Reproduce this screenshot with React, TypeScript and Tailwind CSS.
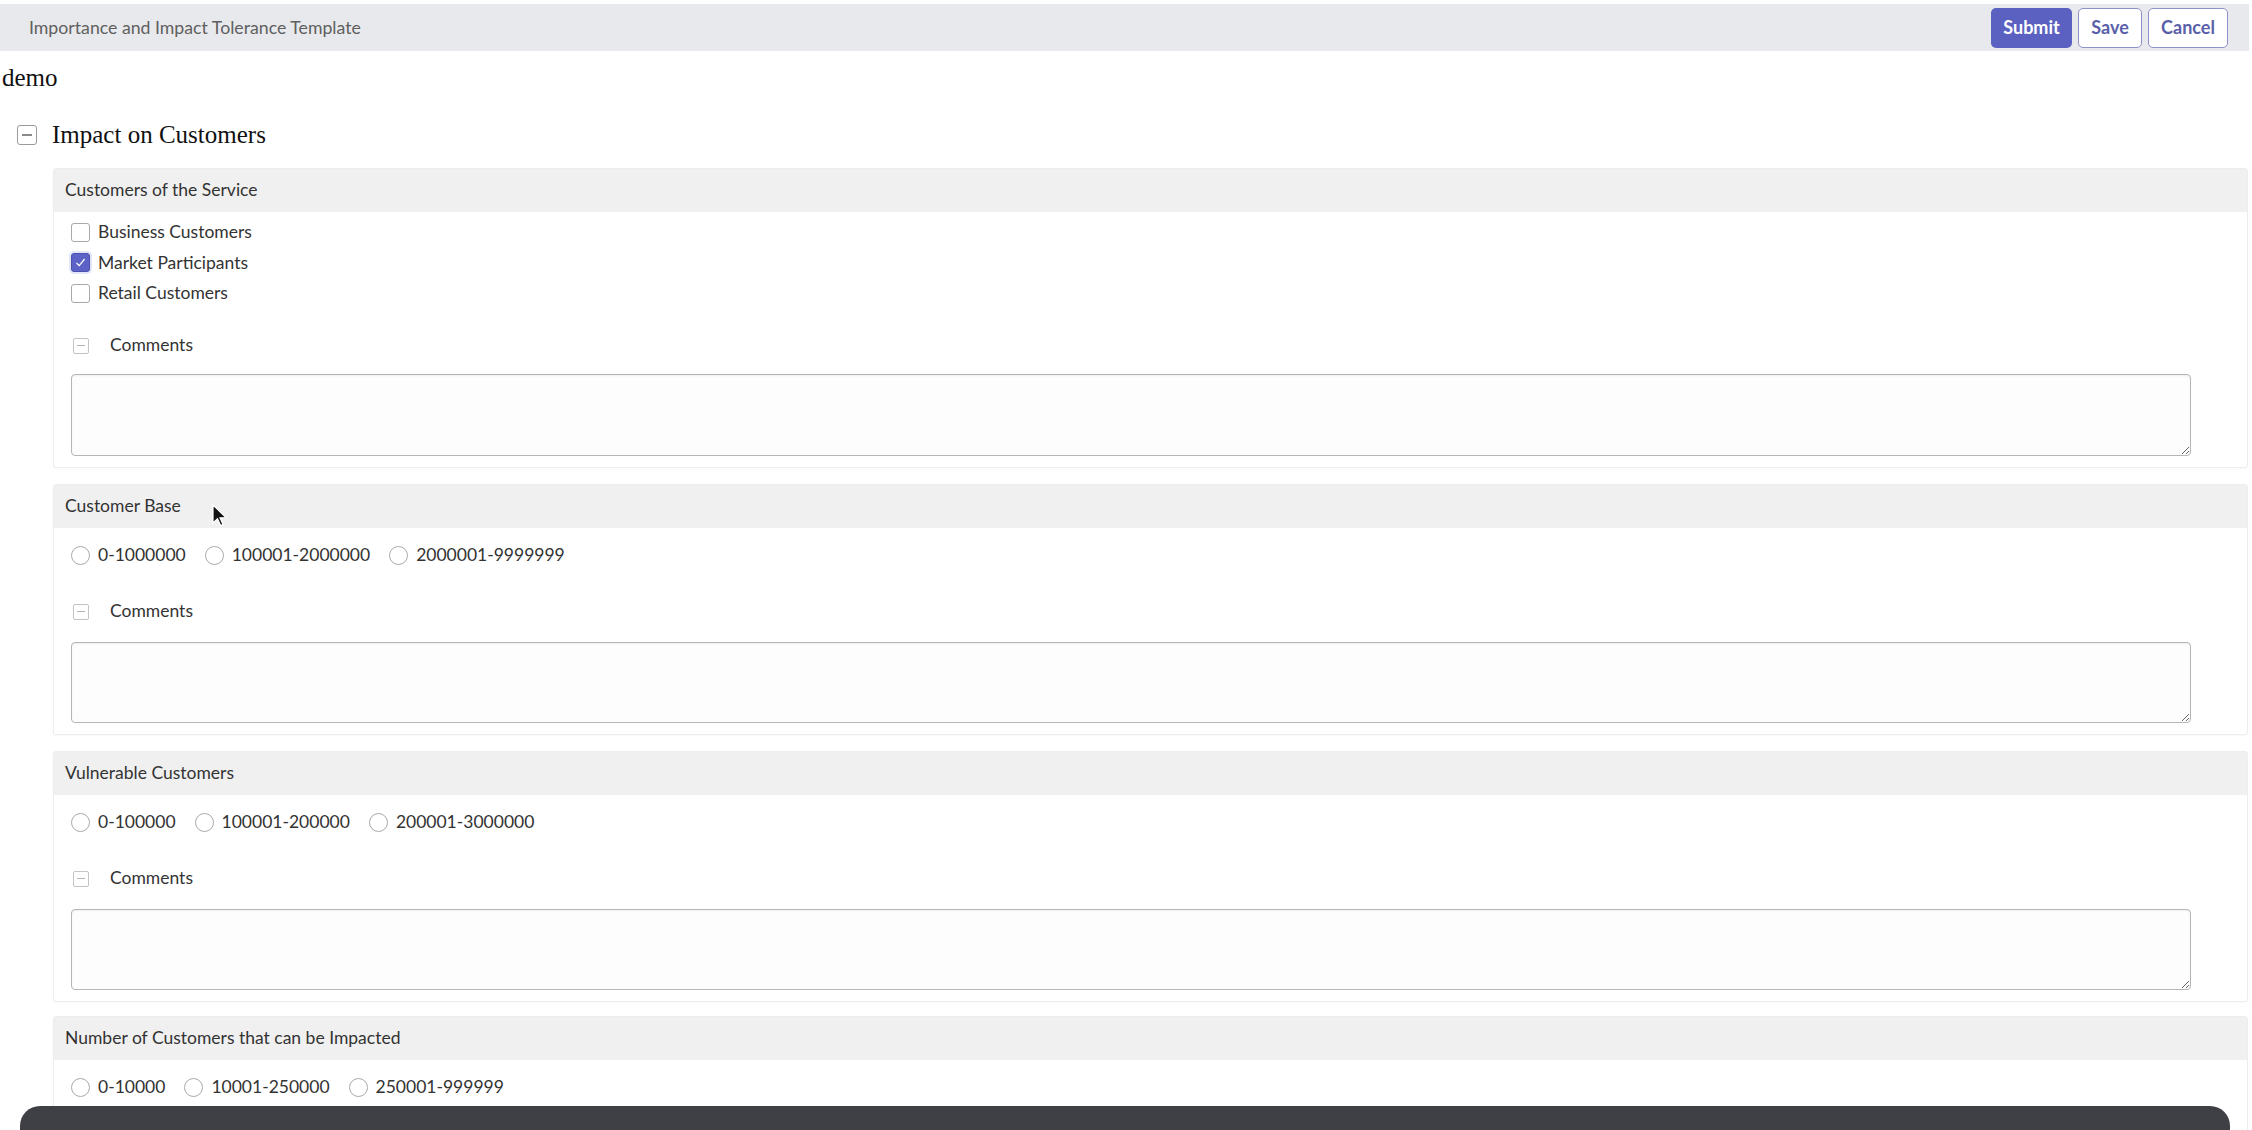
import React from "react";

const lato = { fontFamily: "Lato, 'Open Sans', sans-serif" };

function MinusBox({ big }: { big?: boolean }) {
  if (big) {
    return (
      <span className="flex h-[20px] w-[20px] items-center justify-center rounded-[3px] border border-[#9a9a9a] bg-white">
        <span className="block h-[1.5px] w-[10px] bg-[#8a8a8a]" />
      </span>
    );
  }
  return (
    <span className="flex h-[16px] w-[16px] items-center justify-center rounded-[2px] border border-[#c4c4c4] bg-white">
      <span className="block h-[1.5px] w-[8px] bg-[#b5b5b5]" />
    </span>
  );
}

function Checkbox({ label, checked }: { label: string; checked?: boolean }) {
  return (
    <div className="flex h-[30.5px] items-center">
      {checked ? (
        <span className="flex h-[19px] w-[19px] items-center justify-center rounded-[3px] border border-[#4b51ad] bg-[#5d63c6] shadow-[0_0_0_2px_#e3e6f8]">
          <svg width="13" height="13" viewBox="0 0 13 13">
            <path d="M2.5 7 L5.2 9.6 L10.6 3" fill="none" stroke="#fff" strokeWidth="1.2" />
          </svg>
        </span>
      ) : (
        <span className="h-[19px] w-[19px] rounded-[3px] border border-[#a9a9a9] bg-white" />
      )}
      <span className="ml-[8px] text-[17.5px] text-[#333]">{label}</span>
    </div>
  );
}

function Radio({ label }: { label: string }) {
  return (
    <div className="mr-[19px] flex items-center">
      <span className="h-[19px] w-[19px] rounded-full border border-[#a9a9a9] bg-white" />
      <span className="ml-[8px] text-[17.5px] text-[#333]">{label}</span>
    </div>
  );
}

function Comments({ mt, taMt, taH }: { mt: string; taMt: string; taH: string }) {
  return (
    <>
      <div className={`flex h-[30px] items-center pl-[19px] ${mt}`}>
        <MinusBox />
        <span className="ml-[21px] text-[17.5px] text-[#333]">Comments</span>
      </div>
      <div className={`mr-[56px] pl-[17px] ${taMt}`}>
        <textarea
          className={`block w-full rounded-[4px] border-[1.5px] border-[#b6b6ba] bg-[#fdfdfe] shadow-[inset_0_1px_2px_rgba(0,0,0,0.06)] outline-none ${taH}`}
        />
      </div>
    </>
  );
}

function Card({ title, children, mt }: { title: string; children: React.ReactNode; mt: string }) {
  return (
    <div className={`rounded-[3px] border border-[#ededed] bg-white shadow-[0_1px_2px_rgba(0,0,0,0.03)] ${mt}`}>
      <div className="flex h-[43px] items-center bg-[#f0f0f0] pl-[11px] text-[17.5px] text-[#333]">{title}</div>
      {children}
    </div>
  );
}

export default function App() {
  return (
    <div className="relative h-[1130px] w-[2252px] overflow-hidden bg-white" style={lato}>
      {/* Top bar */}
      <div className="mr-[3px] mt-[4px] flex h-[47px] items-center justify-between bg-[#e8e9ec] pl-[29px] pr-[21px]">
        <span className="mt-[2px] text-[17.7px] text-[#5f5f5f]">Importance and Impact Tolerance Template</span>
        <div className="flex items-center gap-[6px]">
          <button className="h-[40px] w-[81px] rounded-[5px] bg-[#5a61c1] text-[18px] font-bold text-white">Submit</button>
          <button className="h-[40px] w-[64px] rounded-[5px] border border-[#8d91c9] bg-white text-[18px] font-bold text-[#5a5fa9]">Save</button>
          <button className="h-[40px] w-[80px] rounded-[5px] border border-[#8d91c9] bg-white text-[18px] font-bold text-[#5a5fa9]">Cancel</button>
        </div>
      </div>

      {/* demo */}
      <div
        className="ml-[2px] mt-[12px] text-[25px] leading-[30px] text-[#111]"
        style={{ fontFamily: "'Liberation Serif', 'Times New Roman', serif" }}
      >
        demo
      </div>

      {/* Impact on Customers */}
      <div className="ml-[17px] mt-[27px] flex h-[30px] items-center">
        <MinusBox big />
        <span
          className="ml-[15px] text-[25px] text-[#111]"
          style={{ fontFamily: "'Liberation Serif', 'Times New Roman', serif" }}
        >
          Impact on Customers
        </span>
      </div>

      <div className="ml-[53px] mr-[4px]">
        <Card title="Customers of the Service" mt="mt-[18px]">
          <div className="pl-[17px] pt-[5px]">
            <Checkbox label="Business Customers" />
            <Checkbox label="Market Participants" checked />
            <Checkbox label="Retail Customers" />
          </div>
          <Comments mt="mt-[22px]" taMt="mt-[13px]" taH="h-[82px]" />
          <div className="h-[11px]" />
        </Card>

        <Card title="Customer Base" mt="mt-[16px]">
          <div className="mt-[13px] flex h-[30px] items-center pl-[17px]">
            <Radio label="0-1000000" />
            <Radio label="100001-2000000" />
            <Radio label="2000001-9999999" />
          </div>
          <Comments mt="mt-[26px]" taMt="mt-[15px]" taH="h-[81px]" />
          <div className="h-[11px]" />
        </Card>

        <Card title="Vulnerable Customers" mt="mt-[16px]">
          <div className="mt-[13px] flex h-[30px] items-center pl-[17px]">
            <Radio label="0-100000" />
            <Radio label="100001-200000" />
            <Radio label="200001-3000000" />
          </div>
          <Comments mt="mt-[26px]" taMt="mt-[15px]" taH="h-[81px]" />
          <div className="h-[11px]" />
        </Card>

        <Card title="Number of Customers that can be Impacted" mt="mt-[14px]">
          <div className="mt-[13px] flex h-[30px] items-center pl-[17px]">
            <Radio label="0-10000" />
            <Radio label="10001-250000" />
            <Radio label="250001-999999" />
          </div>
          <div className="h-[80px]" />
        </Card>
      </div>

      {/* mouse cursor */}
      <svg className="absolute left-[212px] top-[504px]" width="16" height="24" viewBox="0 0 16 24">
        <path d="M1 1 L1 19 L5.5 14.8 L8.6 21.6 L11 20.5 L8 13.8 L14 13.5 Z" fill="#111" stroke="#fff" strokeWidth="1.2" />
      </svg>

      {/* bottom dark bar overlay */}
      <div className="absolute bottom-0 left-[20px] right-[22px] h-[24px] rounded-t-[20px] bg-[#3f4046]" />
    </div>
  );
}
